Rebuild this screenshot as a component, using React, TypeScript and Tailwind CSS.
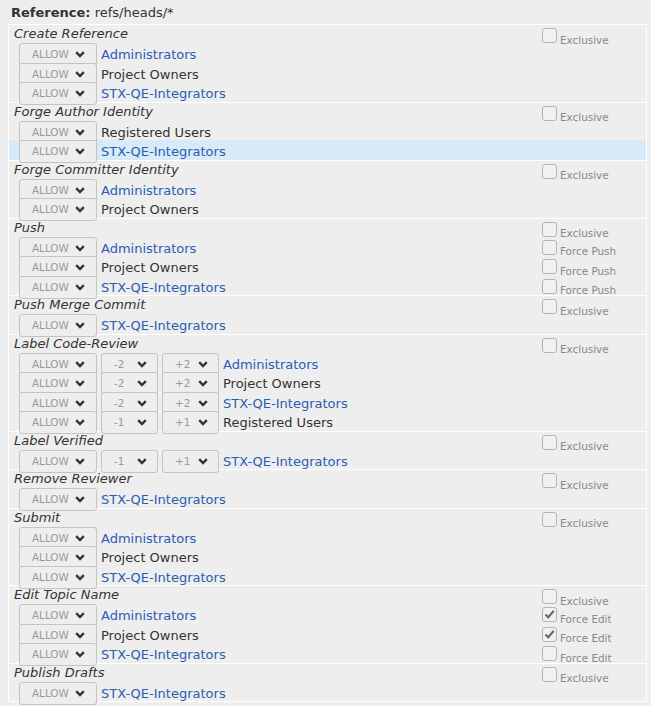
type Row = {
  group: string;
  link?: boolean;
  range?: [string, string];
  force?: string;
  checked?: boolean;
  highlight?: boolean;
};

type Section = { title: string; rows: Row[] };

const sections: Section[] = [
  {
    title: 'Create Reference',
    rows: [
      { group: 'Administrators', link: true },
      { group: 'Project Owners' },
      { group: 'STX-QE-Integrators', link: true },
    ],
  },
  {
    title: 'Forge Author Identity',
    rows: [
      { group: 'Registered Users' },
      { group: 'STX-QE-Integrators', link: true, highlight: true },
    ],
  },
  {
    title: 'Forge Committer Identity',
    rows: [{ group: 'Administrators', link: true }, { group: 'Project Owners' }],
  },
  {
    title: 'Push',
    rows: [
      { group: 'Administrators', link: true, force: 'Force Push' },
      { group: 'Project Owners', force: 'Force Push' },
      { group: 'STX-QE-Integrators', link: true, force: 'Force Push' },
    ],
  },
  { title: 'Push Merge Commit', rows: [{ group: 'STX-QE-Integrators', link: true }] },
  {
    title: 'Label Code-Review',
    rows: [
      { group: 'Administrators', link: true, range: ['-2', '+2'] },
      { group: 'Project Owners', range: ['-2', '+2'] },
      { group: 'STX-QE-Integrators', link: true, range: ['-2', '+2'] },
      { group: 'Registered Users', range: ['-1', '+1'] },
    ],
  },
  {
    title: 'Label Verified',
    rows: [{ group: 'STX-QE-Integrators', link: true, range: ['-1', '+1'] }],
  },
  { title: 'Remove Reviewer', rows: [{ group: 'STX-QE-Integrators', link: true }] },
  {
    title: 'Submit',
    rows: [
      { group: 'Administrators', link: true },
      { group: 'Project Owners' },
      { group: 'STX-QE-Integrators', link: true },
    ],
  },
  {
    title: 'Edit Topic Name',
    rows: [
      { group: 'Administrators', link: true, force: 'Force Edit', checked: true },
      { group: 'Project Owners', force: 'Force Edit', checked: true },
      { group: 'STX-QE-Integrators', link: true, force: 'Force Edit' },
    ],
  },
  { title: 'Publish Drafts', rows: [{ group: 'STX-QE-Integrators', link: true }] },
];

function Chevron() {
  return (
    <svg width="10" height="7" viewBox="0 0 10 7" className="shrink-0">
      <polyline points="1.2,1.2 5,5 8.8,1.2" fill="none" stroke="#333" strokeWidth="2.4" />
    </svg>
  );
}

function Select({ value, wide }: { value: string; wide?: boolean }) {
  return (
    <div
      className={
        wide
          ? 'w-[78px] h-[23px] shrink-0 flex items-center justify-between pl-[12px] pr-[11px] border border-[#c4c4c4] rounded-[3px] bg-[#eeeeee]'
          : 'w-[57px] h-[23px] shrink-0 flex items-center justify-between pl-[12px] pr-[10px] border border-[#c4c4c4] rounded-[3px] bg-[#eeeeee]'
      }
    >
      <span className="text-[10.4px] text-[#999] leading-none">{value}</span>
      <Chevron />
    </div>
  );
}

function Check({ label, checked }: { label: string; checked?: boolean }) {
  return (
    <div className="w-[104px] shrink-0 flex items-end">
      <span className="w-[15px] h-[15px] shrink-0 border border-[#b4b4b4] rounded-[3px] bg-[#f1f1f1] flex items-center justify-center">
        {checked && (
          <svg width="13" height="13" viewBox="0 0 13 13">
            <path d="M2.5 6.5 L5.2 9.3 L10.8 2.8" fill="none" stroke="#6e6e6e" strokeWidth="2.2" />
          </svg>
        )}
      </span>
      <span className="ml-[3px] mb-[-2px] text-[10.4px] leading-none text-[#888]">{label}</span>
    </div>
  );
}

export default function App() {
  return (
    <div
      className="min-h-screen bg-[#eeeeee] text-[13px] text-[#333] pl-[8px] pr-[4px] pt-[4px]"
      style={{ fontFamily: '"DejaVu Sans", Verdana, sans-serif' }}
    >
      {/* Header */}
      <div className="h-[18px] leading-[18px] pl-[3px] mb-[2px]">
        <span className="font-bold">Reference:</span> refs/heads/*
      </div>

      <div className="border border-white">
        {sections.map((s, i) => (
          <div key={s.title} className={i === 0 ? '' : 'border-t border-white'}>
            <div className="h-[18px] flex">
              <div className="flex-1 pl-[5px] leading-[18px] italic">{s.title}</div>
              <Check label="Exclusive" />
            </div>
            {s.rows.map((r, j) => (
              <div
                key={j}
                className={
                  r.highlight
                    ? 'h-[19.5px] flex items-start pl-[10px] bg-[#d8eaf8]'
                    : 'h-[19.5px] flex items-start pl-[10px]'
                }
              >
                <div className="flex-1 flex items-start gap-1">
                  <Select value="ALLOW" wide />
                  {r.range && <Select value={r.range[0]} />}
                  {r.range && <Select value={r.range[1]} />}
                  <span className={r.link ? 'leading-[23px] text-[#2a5db0]' : 'leading-[23px] text-[#333]'}>
                    {r.group}
                  </span>
                </div>
                {r.force && (
                  <div className="h-[18px] flex items-end">
                    <Check label={r.force} checked={r.checked} />
                  </div>
                )}
              </div>
            ))}
          </div>
        ))}
      </div>
    </div>
  );
}
